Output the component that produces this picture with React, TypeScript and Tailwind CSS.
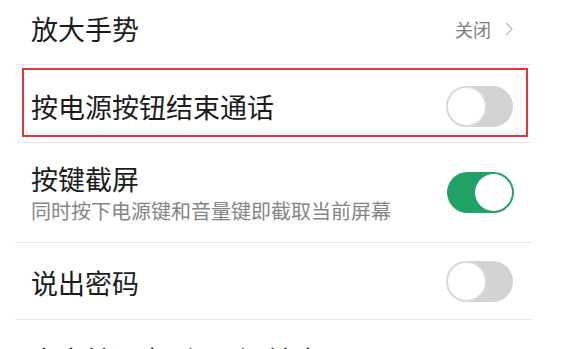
import React from "react";

const font = { fontFamily: '"Noto Sans CJK SC", "Noto Sans", sans-serif' };

function Toggle({ on }: { on: boolean }) {
  return on ? (
    <div className="w-[67px] h-[41px] rounded-full bg-[#21a264] flex items-center justify-end p-[2px]">
      <div className="w-[37px] h-[37px] rounded-full bg-white" />
    </div>
  ) : (
    <div className="w-[67px] h-[41px] rounded-full bg-[#d2d2d2] flex items-center justify-start">
      <div className="w-[41px] h-[41px] rounded-full bg-white border-[2px] border-[#dadada]" />
    </div>
  );
}

function Sep() {
  return <div className="ml-[15px] mr-[31px] h-px bg-[#e9e9e9]" />;
}

export default function App() {
  return (
    <div className="w-[564px] h-[349px] bg-white overflow-hidden" style={font}>
      <div className="h-[64px] pb-[7px] pl-[31px] pr-[51px] flex items-center justify-between">
        <span className="text-[27px] leading-none text-[#1c1c1c]">放大手势</span>
        <div className="flex items-center gap-[14px]">
          <span className="text-[18px] leading-none text-[#7c7c7c]">关闭</span>
          <svg width="8" height="14" viewBox="0 0 8 14" fill="none">
            <path d="M1 1l6 6-6 6" stroke="#bdbdbd" strokeWidth="1.3" />
          </svg>
        </div>
      </div>
      <Sep />
      <div className="relative h-[77px] pt-[5px] pl-[31px] pr-[51px] flex items-center justify-between">
        <span className="text-[27px] leading-none text-[#1c1c1c]">按电源按钮结束通话</span>
        <Toggle on={false} />
        <div className="absolute left-[22px] top-[3px] w-[506px] h-[69px] border-[2px] border-[#e5333a]" />
      </div>
      <Sep />
      <div className="h-[99px] pl-[31px] pr-[50px] flex items-center justify-between">
        <div className="flex flex-col gap-[9px] pt-[1px]">
          <span className="text-[27px] leading-none text-[#1c1c1c]">按键截屏</span>
          <span className="text-[20px] leading-none text-[#858585]">同时按下电源键和音量键即截取当前屏幕</span>
        </div>
        <Toggle on={true} />
      </div>
      <Sep />
      <div className="h-[76px] pl-[31px] pr-[51px] flex items-center justify-between">
        <span className="text-[27px] leading-none text-[#1c1c1c] pt-[3px]">说出密码</span>
        <Toggle on={false} />
      </div>
      <Sep />
      <div className="h-[77px] pt-[26px] pl-[31px] pr-[51px] flex items-start">
        <span className="text-[27px] leading-none text-[#1c1c1c]">文字转语音（TTS）输出</span>
      </div>
    </div>
  );
}
